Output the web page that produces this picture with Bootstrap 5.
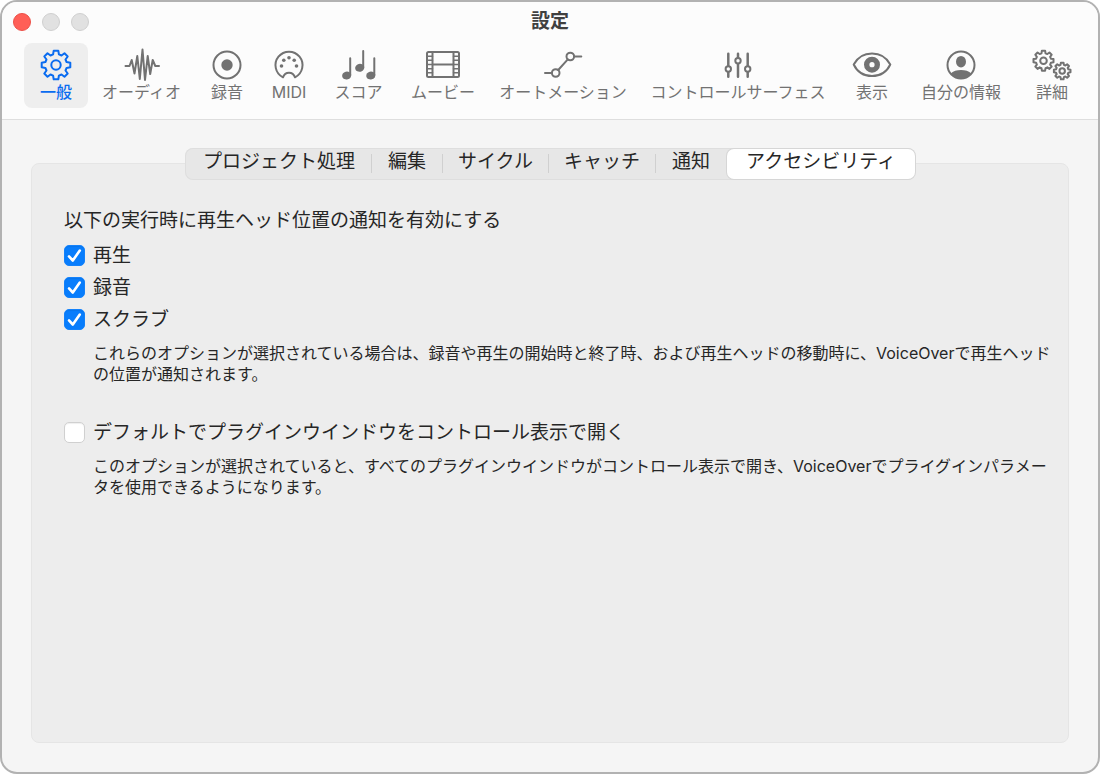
<!DOCTYPE html>
<html lang="ja">
<head>
<meta charset="utf-8">
<meta name="viewport" content="width=device-width, initial-scale=1">
<title>設定</title>
<link rel="stylesheet" href="https://cdn.jsdelivr.net/npm/bootstrap@5.3.0/dist/css/bootstrap.min.css">
<style>
  body { font-family: Inter, "Noto Sans CJK JP", sans-serif; font-size: 19px; line-height: 32px; color: #262626; background: #fff; padding-right: 1px; }
  .window { border: 2px solid #b2b2b2; border-radius: 17px; background: #f5f5f5; overflow: hidden; }
  .window-head { background: #fcfcfc; border-bottom: 1px solid #dedede; padding-bottom: 11px; }
  .titlebar { display: grid; grid-template-columns: 1fr auto 1fr; align-items: center; height: 41px; padding: 0 11px 2px; }
  .titlebar h1 { font-size: 19px; line-height: 32px; font-weight: 700; color: #404040; }
  .light { width: 18px; height: 18px; border-radius: 50%; border: 1px solid #cfcfcf; background: #e1e1e1; padding: 0; }
  .light.close-light { background: #ff5f57; border-color: #ec5048; }
  .tools { display: grid; grid-template-columns: 64fr 107fr 64fr 60fr 79fr 90fr 150fr 200fr 68fr 110fr 72fr; padding: 0 10px 0 22px; }
  .tool { height: 65px; padding: 5px 0 6px; border: 0; border-radius: 8px; background: none; color: #727272; font-size: 16px; line-height: 20px; white-space: nowrap; }
  .tool.active { background: #eee; color: #0a6cf0; font-weight: 500; }
  .tool svg { width: 40px; height: 34px; overflow: visible; fill: none; stroke: currentColor; stroke-width: 2; stroke-linecap: round; stroke-linejoin: round; }
  .tool .solid { fill: currentColor; stroke: none; }
  .tool .hole { fill: #fcfcfc; }
  .pane { padding: 28px 29px 29px; }
  .tabs { position: relative; z-index: 1; height: 32px; margin-bottom: -17px; background: #e7e7e7; border-radius: 8px; box-shadow: inset 0 0 0 1px #dedede; }
  .tabs button { display: block; border: 0; background: none; padding: 0 16px; line-height: 27px; color: #262626; white-space: nowrap; }
  .tabs li:first-child button { padding-left: 18px; }
  .tabs .tab-narrow { padding: 0 15px; }
  .tabs li { border-right: 1px solid transparent; }
  .tabs .divided { border-image: linear-gradient(transparent 7px, #d0d0d0 7px, #d0d0d0 24px, transparent 24px) 1; border-width: 0 1px 0 0; border-style: solid; }
  .tabs button.active { height: 30px; margin-top: 1px; padding: 0 19px 4px; line-height: 26px; background: #fff; border-radius: 7px; box-shadow: 0 0 0 1px #d6d6d6; }
  .panel { background: #ededed; border: 1px solid #e5e5e5; border-radius: 8px; padding: 41px 10px 24px 32px; }
  .panel h2 { font-size: 19px; line-height: 32px; font-weight: 400; margin-bottom: 2px; }
  .option { display: flex; align-items: center; gap: 8px; }
  .option label { padding-top: 2px; line-height: 30px; }
  .option .form-check-input { width: 21px; height: 21px; margin: 0; flex: none; border: 1px solid #d0d0d0; border-radius: 5px; background-color: #fff; box-shadow: inset 0 1px 1px #0001; }
  .option .form-check-input:checked { border-color: #1482fb; background-color: #087dfc; background-size: 21px; background-image: url("data:image/svg+xml,%3Csvg xmlns='http://www.w3.org/2000/svg' viewBox='0 0 21 21'%3E%3Cpath d='M5 11.4l3.8 4.1L15.8 5.5' fill='none' stroke='white' stroke-width='2.6' stroke-linecap='round' stroke-linejoin='round'/%3E%3C/svg%3E"); }
  .note { margin: 8px 0 0 29px; font-size: 16px; line-height: 21px; }
  .option-gap { margin-top: 31px; }
</style>
</head>
<body>
<svg class="d-none" aria-hidden="true">
  <symbol id="gear" overflow="visible">
    <path vector-effect="non-scaling-stroke" d="M-2.3-14.3H2.3L2.9-10.6L5.5-9.5L8.5-11.7L11.7-8.5L9.5-5.5L10.6-2.9L14.3-2.3V2.3L10.6 2.9L9.5 5.5L11.7 8.5L8.5 11.7L5.5 9.5L2.9 10.6L2.3 14.3H-2.3L-2.9 10.6L-5.5 9.5L-8.5 11.7L-11.7 8.5L-9.5 5.5L-10.6 2.9L-14.3 2.3V-2.3L-10.6-2.9L-9.5-5.5L-11.7-8.5L-8.5-11.7L-5.5-9.5L-2.9-10.6Z"/>
    <circle vector-effect="non-scaling-stroke" r="4.7"/>
  </symbol>
</svg>
<div class="window min-vh-100 d-flex flex-column">
  <header class="window-head">
    <div class="titlebar">
      <div class="d-flex" style="gap:11px">
        <button class="light close-light" aria-label="閉じる"></button>
        <button class="light" aria-label="しまう" disabled></button>
        <button class="light" aria-label="拡大" disabled></button>
      </div>
      <h1 class="m-0">設定</h1>
      <span></span>
    </div>
    <nav class="tools" aria-label="設定の分類">
      <button class="tool active"><svg class="d-block mx-auto" viewBox="-20 -17 40 34"><use href="#gear"/></svg>一般</button>
      <button class="tool"><svg class="d-block mx-auto" viewBox="-20 -17 40 34"><path d="M-16.5 1H-12.5L-10.3-5L-7.5 8.5L-4.7-9L-2.2 14L.5-15.5L3 15L5.7-9L8.2 9L10.7-5L13.3 1H17"/></svg>オーディオ</button>
      <button class="tool"><svg class="d-block mx-auto" viewBox="-20 -17 40 34"><circle r="13.5"/><circle class="solid" r="5.7"/></svg>録音</button>
      <button class="tool"><svg class="d-block mx-auto" viewBox="-20 -17 40 34"><path d="M-6 12.3A13.5 13.5 0 1 1 6 12.3C5 9.5 3 7.8 0 7.8S-5 9.5-6 12.3Z"/><g class="solid"><circle cx="-7.5" cy="1" r="1.8"/><circle cx="-5.2" cy="-4.8" r="1.8"/><circle cy="-7.2" r="1.8"/><circle cx="5.2" cy="-4.8" r="1.8"/><circle cx="7.5" cy="1" r="1.8"/></g></svg>MIDI</button>
      <button class="tool"><svg class="d-block mx-auto" viewBox="-20 -17 40 34"><path d="M-8.8-6.7V10M4.2-14V3M15.3-6.7V10"/><g class="solid"><ellipse cx="-12.3" cy="10.5" rx="4.6" ry="4" transform="rotate(-15 -12.3 10.5)"/><ellipse cx=".7" cy="2.8" rx="4.6" ry="4" transform="rotate(-15 .7 2.8)"/><ellipse cx="11.8" cy="10.5" rx="4.6" ry="4" transform="rotate(-15 11.8 10.5)"/></g></svg>スコア</button>
      <button class="tool"><svg class="d-block mx-auto" viewBox="-20 -17 40 34"><rect x="-16" y="-13" width="32" height="25" rx="1.5"/><path d="M-10.5-13V12M10.5-13V12M-10.5-.5H10.5" /><path stroke-width="1.5" d="M-16-8.8H-10.5M-16-4.7H-10.5M-16-.5H-10.5M-16 3.7H-10.5M-16 7.8H-10.5M10.5-8.8H16M10.5-4.7H16M10.5-.5H16M10.5 3.7H16M10.5 7.8H16"/></svg>ムービー</button>
      <button class="tool"><svg class="d-block mx-auto" viewBox="-20 -17 40 34"><path d="M-18 8H-11.3M-4.8 5L4.8-5.6M11.3-8.5H18.3"/><circle cx="-7.3" cy="8" r="3.8"/><circle cx="7.3" cy="-8.5" r="3.8"/></svg>オートメーション</button>
      <button class="tool"><svg class="d-block mx-auto" viewBox="-20 -17 40 34"><path stroke-width="2.5" d="M-9.7-11.3V11.7M0-11.3V11.7M9.7-11.3V11.7"/><circle class="hole" cx="-9.7" cy="4" r="2.7"/><circle class="hole" cy="-4.3" r="2.7"/><circle class="hole" cx="9.7" cy="4" r="2.7"/></svg>コントロールサーフェス</button>
      <button class="tool"><svg class="d-block mx-auto" viewBox="-20 -17 40 34"><path d="M-18.3-.5C-14.5-7.5-8-11.5 0-11.5S14.5-7.5 18.3-.5C14.5 7.5 8 11 0 11S-14.5 7.5-18.3-.5Z"/><circle cy="-.3" r="5.3" stroke-width="5.4"/></svg>表示</button>
      <button class="tool"><svg class="d-block mx-auto" viewBox="-20 -17 40 34"><circle r="13.5"/><ellipse class="solid" cy="-3.3" rx="5" ry="5.8"/><path class="solid" d="M-10.5 8.8C-8 5.8-4 4.9 0 4.9S8 5.8 10.5 8.8A13.7 13.7 0 0 1-10.5 8.8Z"/></svg>自分の情報</button>
      <button class="tool"><svg class="d-block mx-auto" viewBox="-20 -17 40 34"><use href="#gear" transform="translate(-8.5 -4.3) scale(.7)"/><use href="#gear" transform="translate(10.2 6) scale(.58)"/></svg>詳細</button>
    </nav>
  </header>
  <main class="pane flex-grow-1 d-flex flex-column">
    <ul class="tabs list-unstyled d-flex align-self-center" role="tablist">
      <li class="divided" role="presentation"><button role="tab">プロジェクト処理</button></li>
      <li class="divided" role="presentation"><button role="tab">編集</button></li>
      <li class="divided" role="presentation"><button class="tab-narrow" role="tab">サイクル</button></li>
      <li class="divided" role="presentation"><button class="tab-narrow" role="tab">キャッチ</button></li>
      <li role="presentation"><button role="tab">通知</button></li>
      <li class="border-0" role="presentation"><button class="active" role="tab" aria-selected="true">アクセシビリティ</button></li>
    </ul>
    <section class="panel flex-grow-1">
      <h2>以下の実行時に再生ヘッド位置の通知を有効にする</h2>
      <div class="option"><input class="form-check-input" type="checkbox" id="play" checked><label for="play">再生</label></div>
      <div class="option"><input class="form-check-input" type="checkbox" id="record" checked><label for="record">録音</label></div>
      <div class="option"><input class="form-check-input" type="checkbox" id="scrub" checked><label for="scrub">スクラブ</label></div>
      <p class="note">これらのオプションが選択されている場合は、録音や再生の開始時と終了時、および再生ヘッドの移動時に、VoiceOverで再生ヘッド<br>の位置が通知されます。</p>
      <div class="option option-gap"><input class="form-check-input" type="checkbox" id="controls"><label for="controls">デフォルトでプラグインウインドウをコントロール表示で開く</label></div>
      <p class="note">このオプションが選択されていると、すべてのプラグインウインドウがコントロール表示で開き、VoiceOverでプライグインパラメー<br>タを使用できるようになります。</p>
    </section>
  </main>
</div>
<script src="https://cdn.jsdelivr.net/npm/bootstrap@5.3.0/dist/js/bootstrap.bundle.min.js"></script>
</body>
</html>
